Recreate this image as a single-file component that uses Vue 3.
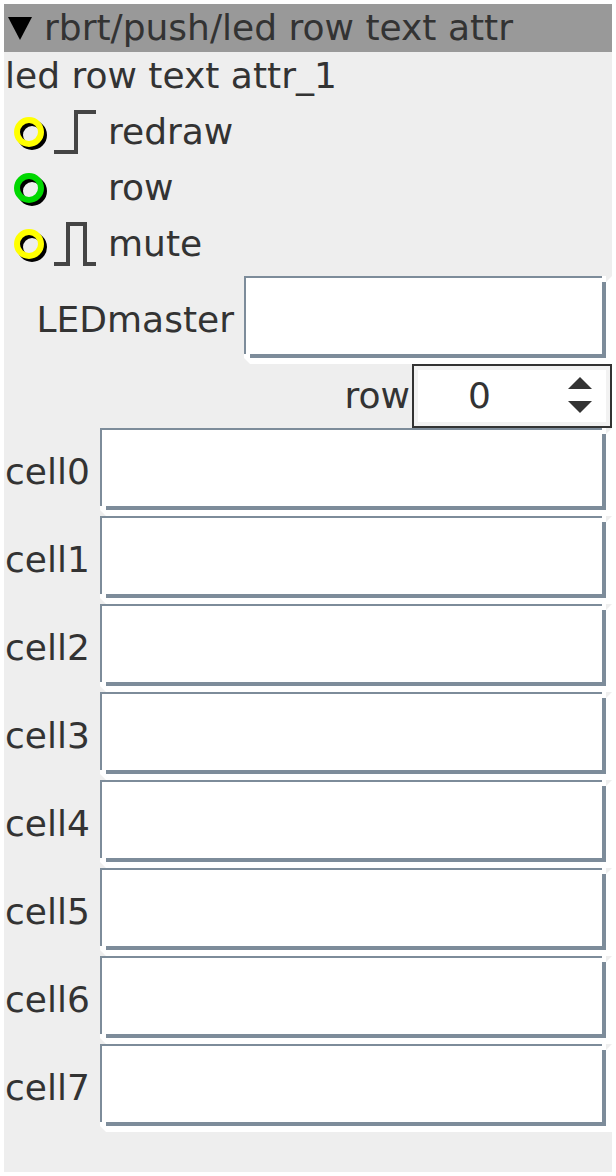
<script setup>
const ports = [
  { name: 'redraw', color: '#ffff00', wave: 'M54 48H76V8H96' },
  { name: 'row', color: '#00d800', wave: '' },
  { name: 'mute', color: '#ffff00', wave: 'M54 48H68V8H85V48H96' },
]
const cells = ['cell0', 'cell1', 'cell2', 'cell3', 'cell4', 'cell5', 'cell6', 'cell7']
</script>

<template>
  <main class="panel">
    <header class="head">
      <svg class="caret" width="24" height="24" viewBox="0 0 24 24"><path d="M0 1H24L12 24Z" fill="#000" /></svg>
      <span>rbrt/push/led row text attr</span>
    </header>
    <div class="title">led row text attr_1</div>

    <div v-for="p in ports" :key="p.name" class="port">
      <svg class="glyph" width="104" height="56" viewBox="4 0 104 56">
        <circle cx="32" cy="31" r="12" fill="none" stroke="#000" stroke-width="6" />
        <circle cx="29" cy="28" r="12" fill="none" :stroke="p.color" stroke-width="6" />
        <path v-if="p.wave" :d="p.wave" fill="none" stroke="#444" stroke-width="4" />
      </svg>
      <span>{{ p.name }}</span>
    </div>

    <div class="led-row">
      <label class="led-label">LEDmaster</label>
      <div class="field"><div class="well"></div></div>
    </div>

    <div class="spin-row">
      <label class="spin-label">row</label>
      <div class="spin">
        <span class="spin-value">0</span>
        <svg class="arrows" width="26" height="38" viewBox="0 0 26 38">
          <path d="M13 0L25 12H1Z" fill="#333" />
          <path d="M1 24H25L13 36Z" fill="#333" />
        </svg>
      </div>
    </div>

    <div v-for="c in cells" :key="c" class="cell-row">
      <label class="cell-label">{{ c }}</label>
      <div class="field"><div class="well"></div></div>
    </div>
  </main>
</template>

<style scoped>
.panel {
  width: 608px;
  height: 1168px;
  margin: 4px 0 0 4px;
  background: #eeeeee;
  color: #333333;
  font-family: "DejaVu Sans", sans-serif;
  font-size: 36px;
  line-height: 40px;
}
.head {
  height: 48px;
  background: #999999;
  display: flex;
  align-items: center;
  gap: 12px;
  padding-left: 4px;
}
.caret { flex: none; }
.title {
  height: 52px;
  padding-left: 1px;
  padding-bottom: 5px;
  display: flex;
  align-items: center;
  box-sizing: border-box;
}
.port {
  height: 56px;
  display: flex;
  align-items: center;
}
.glyph { flex: none; }
.led-row {
  height: 88px;
  margin-top: 4px;
  display: flex;
}
.led-label {
  width: 240px;
  padding-right: 10px;
  padding-top: 24px;
  box-sizing: border-box;
  text-align: right;
  flex: none;
}
.field {
  flex: 1;
  height: 88px;
  box-sizing: border-box;
  position: relative;
  border-right: 6px solid #ffffff;
  border-bottom: 6px solid #ffffff;
}
.field::before {
  content: "";
  position: absolute;
  top: 0;
  right: -6px;
  width: 0;
  height: 0;
  border-top: 6px solid #eeeeee;
  border-right: 6px solid transparent;
}
.field::after {
  content: "";
  position: absolute;
  left: 0;
  bottom: -6px;
  width: 0;
  height: 0;
  border-bottom: 6px solid #eeeeee;
  border-right: 6px solid transparent;
}
.well {
  height: 100%;
  box-sizing: border-box;
  position: relative;
  background: #ffffff;
  border-style: solid;
  border-color: #7d8c9a;
  border-width: 2px 4px 4px 2px;
}
.well::before {
  content: "";
  position: absolute;
  top: -2px;
  right: -4px;
  width: 4px;
  height: 6px;
  background: #ffffff;
}
.well::after {
  content: "";
  position: absolute;
  left: -2px;
  bottom: -4px;
  width: 6px;
  height: 4px;
  background: #ffffff;
}
.spin-row {
  height: 64px;
  display: flex;
  justify-content: flex-end;
}
.spin-label {
  padding-right: 2px;
  padding-top: 12px;
}
.spin {
  width: 200px;
  height: 64px;
  box-sizing: border-box;
  border: 2px solid #333333;
  outline: 4px solid #f2f2f2;
  outline-offset: -6px;
  background: #ffffff;
  display: flex;
  align-items: center;
}
.spin-value { margin-left: 54px; }
.arrows {
  margin-left: auto;
  margin-right: 17px;
}
.cell-row {
  height: 88px;
  display: flex;
}
.cell-label {
  width: 96px;
  flex: none;
  padding-left: 1px;
  padding-top: 24px;
  box-sizing: border-box;
}
</style>
